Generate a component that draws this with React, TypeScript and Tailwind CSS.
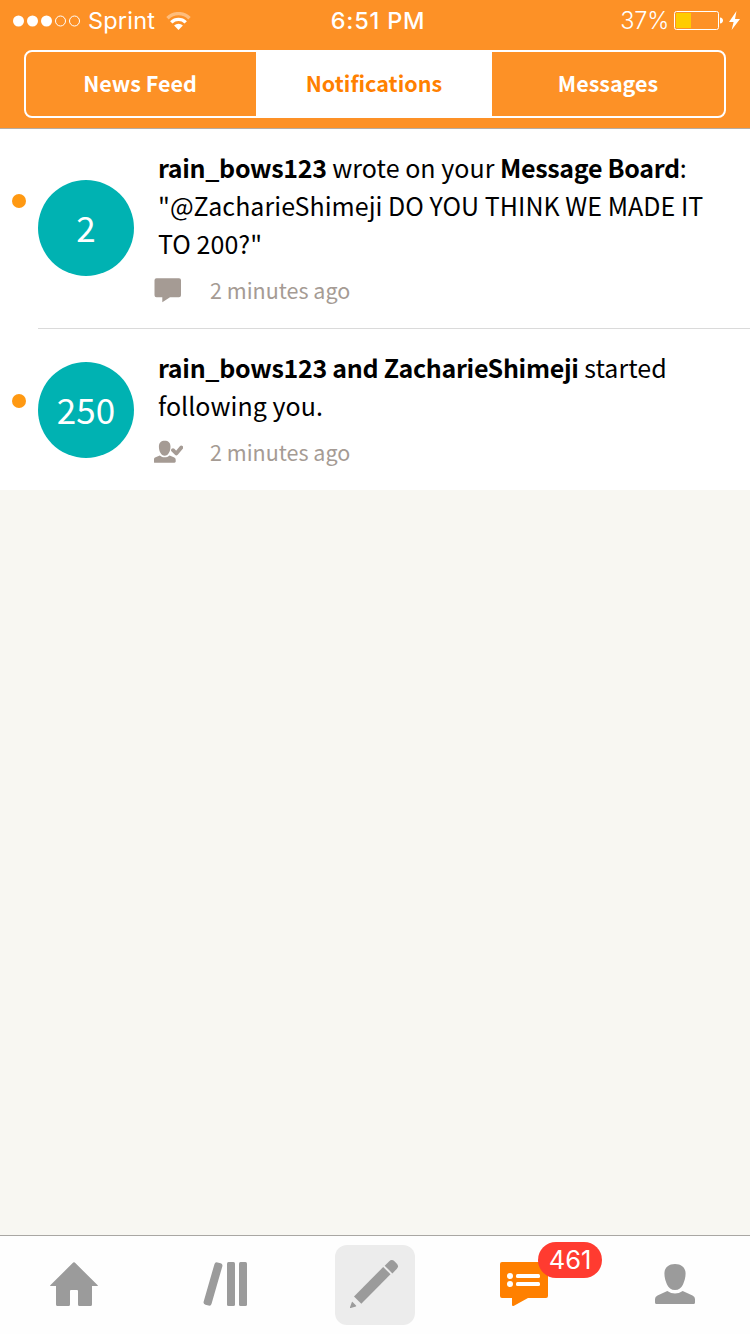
import type { ReactNode } from 'react';
import clsx from 'clsx';

interface Notification {
  id: number;
  count: string;
  avatarOffset: string;
  lines: ReactNode[];
  icon: ReactNode;
  time: string;
}

function CommentIcon() {
  return (
    <svg width="28" height="26" viewBox="0 0 28 26" fill="#a59b94">
      <path d="M2.5 1.3H25a2 2 0 0 1 2 2v15a2 2 0 0 1-2 2h-9l-7.700 5v-5H2.500a2 2 0 0 1-2-2v-15a2 2 0 0 1 2-2z" />
    </svg>
  );
}

function FollowIcon() {
  return (
    <svg width="29" height="26" viewBox="0 0 29 26" fill="#a59b94">
      <path d="M10.7 1.8c3.500 0 5.800 2 5.800 5.700 0 4.600-2.100 9.300-5.800 9.300S4.900 12.100 4.900 7.500c0-3.700 2.300-5.700 5.800-5.700z" />
      <path d="M5.800 16.400c2.900 2.600 6.900 2.600 9.800 0l4.200 1.900c1.300.6 1.900 1.400 1.900 2.600v1.700c0 .7-.5 1.200-1.200 1.200H.9c-.7 0-1.200-.5-1.200-1.200v-1.700c0-1.200.6-2 1.900-2.600z" />
      <path
        d="M19 11.200l3.300 3.300 5-6"
        fill="none"
        stroke="#a59b94"
        strokeWidth="3.8"
        strokeLinecap="round"
        strokeLinejoin="round"
      />
    </svg>
  );
}

const notifications: Notification[] = [
  {
    id: 1,
    count: '2',
    avatarOffset: 'mt-[51px]',
    lines: [
      <>
        <b className="tracking-[-0.32px]">rain_bows123</b> wrote on your{' '}
        <b className="tracking-[-0.32px]">Message Board</b>:
      </>,
      '"@ZacharieShimeji DO YOU THINK WE MADE IT',
      'TO 200?"',
    ],
    icon: <CommentIcon />,
    time: '2 minutes ago',
  },
  {
    id: 2,
    count: '250',
    avatarOffset: 'mt-[33px]',
    lines: [
      <>
        <b className="tracking-[-0.29px]">rain_bows123 and ZacharieShimeji</b> started
      </>,
      'following you.',
    ],
    icon: <FollowIcon />,
    time: '2 minutes ago',
  },
];

function StatusBar() {
  return (
    <div className="flex h-10 items-center justify-between pl-[13px] pr-[10px] pt-px font-['Inter',sans-serif] text-white">
      <div className="flex w-[240px] items-center">
        <svg width="68" height="12" viewBox="0 0 68 12" fill="#fff">
          <circle cx="5.5" cy="6" r="5.5" />
          <circle cx="19.5" cy="6" r="5.5" />
          <circle cx="33.5" cy="6" r="5.5" />
          <circle cx="47.5" cy="6" r="5" fill="none" stroke="#fff" />
          <circle cx="61.5" cy="6" r="5" fill="none" stroke="#fff" />
        </svg>
        <span className="ml-[7px] w-[78px] pt-px text-[23.5px] leading-10 tracking-[0.2px]">Sprint</span>
        <svg width="25" height="18" viewBox="0 0 25 18" fill="none" stroke="#fff" strokeWidth="3.4">
          <path d="M1.5 6.200a15.500 15.500 0 0 1 22 0" opacity=".4" />
          <path d="M5.3 10.400a10.200 10.200 0 0 1 14.400 0" />
          <path d="M12.5 18l-4.400-4.400a6.300 6.300 0 0 1 8.800 0z" fill="#fff" stroke="none" />
        </svg>
      </div>
      <span className="ml-[3px] pt-px text-[23.5px] font-medium leading-10 tracking-[0.8px]">6:51 PM</span>
      <div className="flex w-[240px] items-center justify-end">
        <span className="mr-[5px] pt-px text-[23.5px] font-light leading-10 tracking-[-0.2px]">37%</span>
        <svg width="50" height="20" viewBox="0 0 50 20">
          <rect x=".5" y=".5" width="44" height="18" rx="2" fill="none" stroke="#fff" />
          <rect x="2" y="2" width="15" height="15" fill="#ffcc00" />
          <path d="M46 6.500c2 0 3 1.500 3 3s-1 3-3 3z" fill="#fff" />
        </svg>
        <svg className="ml-[5px]" width="11" height="20" viewBox="0 0 11 20" fill="#fff">
          <path d="M7.500 0L0 11h4.600L2.600 19 11 8H6z" />
        </svg>
      </div>
    </div>
  );
}

function Tabs() {
  return (
    <div className="mx-6 mt-[10px] flex h-[68px] overflow-hidden rounded-lg border-2 border-white text-[21.5px] font-bold leading-[61px] text-white">
      <button className="w-[230px] pb-[3px] pr-[2px]">News Feed</button>
      <button className="w-[236px] bg-white pb-[3px] tracking-[0.05px] text-[#ff8000]">Notifications</button>
      <button className="w-[232px] pb-[3px]">Messages</button>
    </div>
  );
}

function NotificationRow({ item, last }: { item: Notification; last: boolean }) {
  return (
    <li>
      <div className="flex items-start">
        <span className="ml-3 mt-[65px] size-[14px] rounded-full bg-[#ff9912]" />
        <div
          className={clsx(
            'ml-3 flex size-24 items-center justify-center rounded-full bg-[#00b2b2] pb-1 text-[35px] leading-none text-white',
            item.avatarOffset,
          )}
        >
          {item.count}
        </div>
        <div className="ml-5 pb-[23px] pt-[19px]">
          <div className="pl-1 text-[25px] leading-[38px] tracking-[0.04px] text-black">
            {item.lines.map((line, i) => (
              <p key={i} className="whitespace-nowrap">{line}</p>
            ))}
          </div>
          <div className="mt-[13px] flex h-[30px] items-center text-[21.5px] leading-[30px] text-[#a59b94]">
            <span className="w-[56px]">{item.icon}</span>
            <span>{item.time}</span>
          </div>
        </div>
      </div>
      {!last && <div className="ml-[38px] h-px bg-[#dadada]" />}
    </li>
  );
}

function BottomNav() {
  return (
    <nav className="flex h-[99px] border-t border-[#a9a7a3] bg-[#fefefe]">
      <button className="flex w-[150px] items-start justify-center pr-[2px] pt-[26px]">
        <svg width="48" height="44" viewBox="0 0 48 44" fill="#9b9b9b">
          <path d="M23.200.6q.8-.8 1.600 0L47.700 23.200q.5.8-.5.8H42v18.500q0 1.500-1.500 1.500h-11q-1.500 0-1.500-1.500V29q0-1-1-1h-6q-1 0-1 1v13.500q0 1.500-1.500 1.500h-11Q6 44 6 42.500V24H.8q-1 0-.5-.8z" />
        </svg>
      </button>
      <button className="flex w-[150px] items-start justify-center pt-[26px]">
        <svg className="overflow-visible" width="44" height="44" viewBox="0 0 44 44" fill="#9b9b9b">
          <rect x="5.900" y="0" width="8.200" height="44" rx="2.5" transform="rotate(16 10 22)" />
          <rect x="24" width="8" height="44" rx="1.5" />
          <rect x="36" width="8" height="44" rx="1.5" />
        </svg>
      </button>
      <button className="flex w-[150px] items-start justify-center pt-[9px]">
        <svg className="rounded-xl bg-[#ececec]" width="80" height="80" viewBox="0 0 80 80" fill="#9b9b9b">
          <path d="M15 62.200l1.800-5q.3-.6.800-.1l3.400 3.400q.6.600-.1.900l-5.200 1.700q-1 .1-.7-.9z" />
          <path d="M19 51.500l29.200-29.500 7.300 7.300-29.200 29.500z" />
          <path d="M49.700 20.700l4.300-4.200q2.600-2.500 5.200-.5l2.700 2.700q2.200 2.500 0 5.100L57.400 28.400z" />
        </svg>
      </button>
      <button className="flex w-[150px] items-start justify-center pr-[2px] pt-[26px]">
        <span className="relative">
          <svg width="48" height="44" viewBox="0 0 48 44">
            <path d="M2 0h44a2 2 0 0 1 2 2v32a2 2 0 0 1-2 2H28L14 43.700q-2 .8-2-1V36H2a2 2 0 0 1-2-2V2a2 2 0 0 1 2-2z" fill="#ff8000" />
            <g fill="#fff">
              <circle cx="10" cy="14" r="3" />
              <circle cx="10" cy="22" r="3" />
              <rect x="16" y="12" width="24" height="4" rx="1.5" />
              <rect x="16" y="20" width="24" height="4" rx="1.5" />
            </g>
          </svg>
          <span className="absolute -top-5 left-[38px] flex h-9 w-16 items-center justify-center rounded-full bg-[#ff3b30] font-['Inter',sans-serif] text-[25.5px] leading-9 text-white">
            461
          </span>
        </span>
      </button>
      <button className="flex w-[150px] items-start justify-center pt-[28px]">
        <svg width="40" height="40" viewBox="0 0 40 40" fill="#9b9b9b">
          <path d="M20 0c6.500 0 10.600 3.800 10.600 9.500 0 4-1.300 8-2.600 11-1.500 3.500-4.200 5.500-8 5.500s-6.500-2-8-5.500c-1.300-3-2.600-7-2.600-11C9.400 3.800 13.500 0 20 0z" />
          <path d="M12.300 27q7.700 5.200 15.400 0l9.800 4.600q2.500 1.200 2.500 3.400v3.500q0 1.500-1.500 1.500h-37Q0 40 0 38.500V35q0-2.200 2.500-3.400z" />
        </svg>
      </button>
    </nav>
  );
}

export default function App() {
  return (
    <div className="flex h-[1334px] w-[750px] flex-col bg-[#f8f7f2] font-['Noto_Sans_CJK_SC',sans-serif]">
      <header className="h-[129px] border-b border-[#b5aca3] bg-[#fd9126]">
        <StatusBar />
        <Tabs />
      </header>
      <main className="flex-1">
        <ul className="bg-white">
          {notifications.map((item, i) => (
            <NotificationRow key={item.id} item={item} last={i === notifications.length - 1} />
          ))}
        </ul>
      </main>
      <BottomNav />
    </div>
  );
}
